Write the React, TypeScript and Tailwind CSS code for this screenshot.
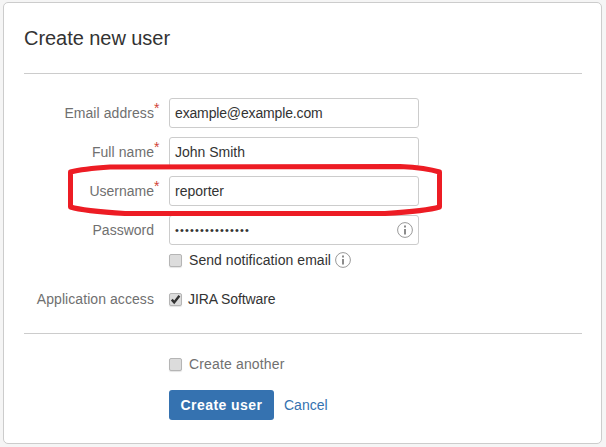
import React from "react";

const Info = () => (
  <svg width="16" height="16" viewBox="0 0 16 16" className="block">
    <circle cx="8" cy="8" r="7.4" fill="#fff" stroke="#999" strokeWidth="1" />
    <rect x="7" y="3.5" width="2" height="2" fill="#8c8c8c" />
    <rect x="7" y="7" width="2" height="5.5" fill="#8c8c8c" />
  </svg>
);

const Check = ({ checked = false }: { checked?: boolean }) => (
  <span className="relative block w-[11px] h-[11px] rounded-[2px] bg-[#dcdcdc] border border-[#b5b5b5] shadow-[0_1px_1px_#e4e4e4] box-content">
    {checked && (
      <svg width="11" height="11" viewBox="0 0 11 11" className="absolute left-0 top-0">
        <path d="M1.8 5.6 L4.2 8.4 L9.4 1.8" fill="none" stroke="#333" strokeWidth="2.4" />
      </svg>
    )}
  </span>
);

const Field = ({ label, req, value, info, valueClass, labelClass }: { label: string; req?: boolean; value: string; info?: boolean; valueClass?: string; labelClass?: string }) => (
  <div className="flex h-[30px] mb-[9px] items-center">
    <div className="w-[130px] text-right text-[#707070] relative">
      <span className={labelClass}>{label}</span>
      {req && <span className="absolute left-[130px] top-[-5px] text-[#d04437] leading-[20px]">*</span>}
    </div>
    <div className="ml-[15px] w-[250px] h-[30px] relative border border-[#cccccc] rounded-[3px] bg-white flex items-center pl-[5px] text-[#333333]">
      <span className={valueClass}>{value}</span>
      {info && (
        <span className="absolute right-[5px] top-[6px]">
          <Info />
        </span>
      )}
    </div>
  </div>
);

export default function App() {
  return (
    <div className="w-[606px] h-[447px] bg-[#f5f5f5] pt-[2px] pl-[3px] overflow-hidden font-['Liberation_Sans',Arial,sans-serif] text-[14px] leading-[20px]">
      <div className="relative w-[599px] h-[442px] bg-white border border-[#cccccc] rounded-[5px] pt-[20px] px-[20px]">
        <h1 className="text-[20px] leading-[30px] text-[#333333] h-[50px] font-normal tracking-[-0.05px]">Create new user</h1>
        <div className="border-t border-[#cccccc] w-[558px] mb-[24px]" />

        <Field label="Email address" req value="example@example.com" valueClass="tracking-[-0.15px]" labelClass="tracking-[0.07px]" />
        <Field label="Full name" req value="John Smith" labelClass="tracking-[0.07px]" />
        <Field label="Username" req value="reporter" />
        <Field label="Password" value="•••••••••••••••" info valueClass="text-[11px] tracking-[1.15px]" />

        <div className="flex items-center ml-[145px] -mt-[4px] h-[20px] text-[#333333]">
          <Check />
          <span className="ml-[7px] tracking-[0.05px]">Send notification email</span>
          <span className="ml-[4px]"><Info /></span>
        </div>

        <div className="flex items-center h-[20px] mt-[19px]">
          <div className="w-[130px] text-right text-[#707070] tracking-[0.07px]">Application access</div>
          <div className="ml-[15px] flex items-center text-[#333333]">
            <Check checked />
            <span className="ml-[6px] tracking-[-0.1px]">JIRA Software</span>
          </div>
        </div>

        <div className="border-t border-[#cccccc] w-[558px] mt-[24px]" />

        <div className="flex items-center ml-[145px] mt-[20px] h-[20px] text-[#707070]">
          <Check />
          <span className="ml-[7px] tracking-[0.15px]">Create another</span>
        </div>

        <div className="flex items-center ml-[145px] mt-[16px]">
          <button className="w-[105px] h-[30px] rounded-[3px] bg-[#3572b0] text-white font-bold tracking-[0.45px]">Create user</button>
          <a className="ml-[10px] text-[#3572b0]">Cancel</a>
        </div>

        <svg width="606" height="447" className="absolute left-[-4px] top-[-3px] pointer-events-none" viewBox="0 0 606 447">
          <path
            d="M70.5 172 L70.5 207 C80 210 100 212 125 213.5 L385 213.5 C410 212 430 210 439.5 207 L439.5 172 C430 169 410 167 400 166.5 L110 167 C95 168 80 169.5 70.5 172 Z"
            fill="none"
            stroke="#ed1c24"
            strokeWidth="5"
            strokeLinejoin="round"
          />
        </svg>
      </div>
    </div>
  );
}
